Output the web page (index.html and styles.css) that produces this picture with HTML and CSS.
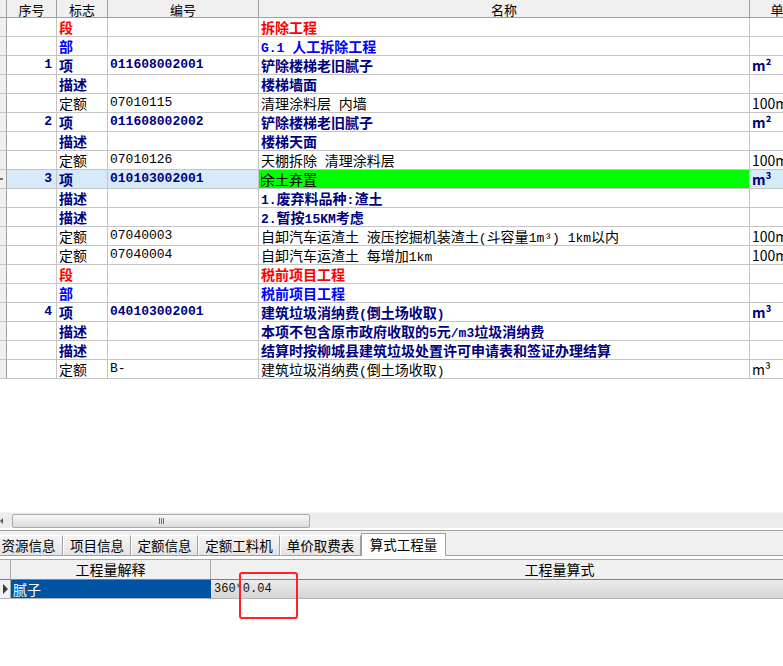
FILE: index.html
```html
<!DOCTYPE html>
<html lang="zh-CN">
<head>
<meta charset="utf-8">
<title>算式工程量</title>
<link rel="stylesheet" href="styles.css">
</head>
<body>
<div class="screen">
  <div class="main">
    <div class="row head">
      <div class="c rh"></div>
      <div class="c hd">序号</div>
      <div class="c hd">标志</div>
      <div class="c hd">编号</div>
      <div class="c hd">名称</div>
      <div class="c hd">单位</div>
    </div>
    <div class="row red">
      <div class="c rh"></div><div class="c num"></div><div class="c">段</div><div class="c"></div><div class="c">拆除工程</div><div class="c"></div>
    </div>
    <div class="row blue">
      <div class="c rh"></div><div class="c num"></div><div class="c">部</div><div class="c"></div><div class="c"><span class="en">G.1 </span>人工拆除工程</div><div class="c"></div>
    </div>
    <div class="row navy">
      <div class="c rh"></div><div class="c num">1</div><div class="c">项</div><div class="c code">011608002001</div><div class="c">铲除楼梯老旧腻子</div><div class="c unit">m²</div>
    </div>
    <div class="row navy">
      <div class="c rh"></div><div class="c num"></div><div class="c">描述</div><div class="c"></div><div class="c">楼梯墙面</div><div class="c"></div>
    </div>
    <div class="row reg">
      <div class="c rh"></div><div class="c num"></div><div class="c">定额</div><div class="c code">07010115</div><div class="c">清理涂料层<span class="en"> </span>内墙</div><div class="c unit">100m²</div>
    </div>
    <div class="row navy">
      <div class="c rh"></div><div class="c num">2</div><div class="c">项</div><div class="c code">011608002002</div><div class="c">铲除楼梯老旧腻子</div><div class="c unit">m²</div>
    </div>
    <div class="row navy">
      <div class="c rh"></div><div class="c num"></div><div class="c">描述</div><div class="c"></div><div class="c">楼梯天面</div><div class="c"></div>
    </div>
    <div class="row reg">
      <div class="c rh"></div><div class="c num"></div><div class="c">定额</div><div class="c code">07010126</div><div class="c">天棚拆除<span class="en"> </span>清理涂料层</div><div class="c unit">100m²</div>
    </div>
    <div class="row navy sel">
      <div class="c rh"><span class="mark"></span></div><div class="c num">3</div><div class="c">项</div><div class="c code">010103002001</div><div class="c edit"><span class="caret"></span>余土弃置</div><div class="c unit">m³</div>
    </div>
    <div class="row navy">
      <div class="c rh"></div><div class="c num"></div><div class="c">描述</div><div class="c"></div><div class="c"><span class="en">1.</span>废弃料品种<span class="en">:</span>渣土</div><div class="c"></div>
    </div>
    <div class="row navy">
      <div class="c rh"></div><div class="c num"></div><div class="c">描述</div><div class="c"></div><div class="c"><span class="en">2.</span>暂按<span class="en">15KM</span>考虑</div><div class="c"></div>
    </div>
    <div class="row reg">
      <div class="c rh"></div><div class="c num"></div><div class="c">定额</div><div class="c code">07040003</div><div class="c">自卸汽车运渣土<span class="en"> </span>液压挖掘机装渣土<span class="en">(</span>斗容量<span class="en">1m³) 1km</span>以内</div><div class="c unit">100m³</div>
    </div>
    <div class="row reg">
      <div class="c rh"></div><div class="c num"></div><div class="c">定额</div><div class="c code">07040004</div><div class="c">自卸汽车运渣土<span class="en"> </span>每增加<span class="en">1km</span></div><div class="c unit">100m³</div>
    </div>
    <div class="row red">
      <div class="c rh"></div><div class="c num"></div><div class="c">段</div><div class="c"></div><div class="c">税前项目工程</div><div class="c"></div>
    </div>
    <div class="row blue">
      <div class="c rh"></div><div class="c num"></div><div class="c">部</div><div class="c"></div><div class="c">税前项目工程</div><div class="c"></div>
    </div>
    <div class="row navy">
      <div class="c rh"></div><div class="c num">4</div><div class="c">项</div><div class="c code">040103002001</div><div class="c">建筑垃圾消纳费<span class="en">(</span>倒土场收取<span class="en">)</span></div><div class="c unit">m³</div>
    </div>
    <div class="row navy">
      <div class="c rh"></div><div class="c num"></div><div class="c">描述</div><div class="c"></div><div class="c">本项不包含原市政府收取的<span class="en">5</span>元<span class="en">/m3</span>垃圾消纳费</div><div class="c"></div>
    </div>
    <div class="row navy">
      <div class="c rh"></div><div class="c num"></div><div class="c">描述</div><div class="c"></div><div class="c">结算时按柳城县建筑垃圾处置许可申请表和签证办理结算</div><div class="c"></div>
    </div>
    <div class="row reg">
      <div class="c rh"></div><div class="c num"></div><div class="c">定额</div><div class="c code">B-</div><div class="c">建筑垃圾消纳费<span class="en">(</span>倒土场收取<span class="en">)</span></div><div class="c unit">m³</div>
    </div>
  </div>

  <div class="hscroll">
    <span class="arrow"></span>
    <div class="thumb"><span class="grip"></span></div>
  </div>

  <div class="tabs">
    <div class="tab first">资源信息</div>
    <div class="tab w68">项目信息</div>
    <div class="tab w67">定额信息</div>
    <div class="tab w82">定额工料机</div>
    <div class="tab w81">单价取费表</div>
    <div class="tab active">算式工程量</div>
    <div class="tabfill"></div>
  </div>

  <div class="bgrid">
    <div class="brow">
      <div class="bc brh"></div>
      <div class="bc bhd">工程量解释</div>
      <div class="bc bhd">工程量算式</div>
    </div>
    <div class="brow">
      <div class="bc brh data"><span class="tri"></span></div>
      <div class="bc bsel">腻子</div>
      <div class="bc bexpr">360*0.04</div>
    </div>
  </div>

  <div class="highlight"></div>
</div>
</body>
</html>
```

FILE: styles.css
```css
* { box-sizing: border-box; }

body {
  margin: 0;
  background: #fff;
  font-family: "Noto Sans CJK SC", "Noto Sans", sans-serif;
  font-size: 14px;
  color: #000;
}

.screen {
  width: 783px;
  height: 666px;
  overflow: hidden;
  position: relative;
  display: flex;
  flex-direction: column;
}

.main {
  height: 512px;
  flex: none;
  overflow: hidden;
}

.row {
  display: grid;
  grid-template-columns: 7px 50px 51px 151px 491px 68px;
  width: 818px;
}

.c {
  height: 19px;
  line-height: 18px;
  padding-left: 2px;
  border-right: 1px solid #c4c4c4;
  border-bottom: 1px solid #c4c4c4;
  white-space: nowrap;
}

.c.unit { overflow: hidden; }

.head .c {
  height: 18px;
  line-height: 15px;
  padding: 2px 0 0;
  font-size: 13px;
  text-align: center;
  background: #f0f0f0;
  border-right-color: #a0a0a0;
  border-bottom-color: #a0a0a0;
  font-weight: normal;
  color: #000;
}

.c.rh {
  background: #f0f0f0;
  padding: 0;
  border-right-color: #a0a0a0;
  position: relative;
}

.mark {
  position: absolute;
  left: 0;
  top: 8px;
  width: 3px;
  height: 2px;
  background: #707070;
}

.c.num {
  text-align: right;
  padding-right: 4px;
  font-family: "Liberation Mono", monospace;
  font-size: 13px;
}

.code, .en {
  font-family: "Liberation Mono", monospace;
  font-size: 13px;
}

.red .c { color: #ff0000; font-weight: bold; }
.blue .c { color: #0000ff; font-weight: bold; }
.navy .c { color: #000080; font-weight: bold; }
.reg .c { color: #000; font-weight: normal; }

.sel .c { background: #d6eaf9; }
.sel .c.rh { background: #f0f0f0; }
.sel .c.edit {
  background: #00ff00;
  color: #000;
  font-weight: normal;
}

.caret {
  display: inline-block;
  width: 1px;
  height: 14px;
  margin-right: -1px;
  vertical-align: -2px;
  background: #c000c0;
}

/* horizontal scrollbar */
.hscroll {
  height: 16px;
  flex: none;
  background: #ececec;
  border-top: 1px solid #f4f4f4;
  display: flex;
  align-items: center;
  position: relative;
}

.arrow {
  width: 0;
  height: 0;
  border-right: 3px solid #555;
  border-top: 3px solid transparent;
  border-bottom: 3px solid transparent;
}

.thumb {
  margin-left: 9px;
  width: 298px;
  height: 14px;
  border: 1px solid #a9a9a9;
  border-radius: 2px;
  background: linear-gradient(#f7f7f7, #dcdcdc);
  display: flex;
  align-items: center;
  justify-content: center;
}

.grip {
  width: 5px;
  height: 6px;
  border-left: 1px solid #6f6f6f;
  border-right: 1px solid #6f6f6f;
  background: linear-gradient(90deg, transparent 1px, #6f6f6f 1px, #6f6f6f 2px, transparent 2px);
}

/* tabs */
.tabs {
  margin-top: 2px;
  height: 26px;
  flex: none;
  display: flex;
  align-items: flex-end;
  border-top: 1px solid #a0a0a0;
  background: #f0f0f0;
}

.tab {
  height: 21px;
  line-height: 19px;
  text-align: center;
  white-space: nowrap;
  font-size: 13.5px;
  border: 1px solid;
  border-color: #ffffff #a0a0a0 #a0a0a0 #ffffff;
  background: linear-gradient(#f4f4f4, #e4e4e4);
  flex: none;
}

.tab.first { width: 69px; margin-left: -6px; }
.tab.w68 { width: 68px; }
.tab.w67 { width: 67px; }
.tab.w82 { width: 82px; }
.tab.w81 { width: 81px; }

.tab.active {
  width: 85px;
  height: 23px;
  line-height: 21px;
  background: #fff;
  border-color: #a0a0a0;
  border-bottom: none;
}

.tabfill {
  flex: 1;
  height: 100%;
  border-bottom: 1px solid #a0a0a0;
}

/* bottom grid */
.bgrid {
  margin-top: 3px;
  flex: none;
  border-top: 1px solid #a8a8a8;
  width: 909px;
}

.brow {
  display: grid;
  grid-template-columns: 11px 200px 698px;
}

.bc {
  height: 19px;
  line-height: 18px;
  white-space: nowrap;
  border-right: 1px solid #a8a8a8;
  border-bottom: 1px solid #b4b4b4;
}

.bhd {
  height: 20px;
  line-height: 19px;
  text-align: center;
  background: #f0f0f0;
  border-bottom-color: #808080;
}

.brh {
  height: 20px;
  background: #f0f0f0;
  border-bottom-color: #808080;
}

.brh.data {
  height: 19px;
  border-bottom-color: #b4b4b4;
  display: flex;
  align-items: center;
  padding-left: 3px;
}

.tri {
  width: 0;
  height: 0;
  border-left: 5px solid #3c3c3c;
  border-top: 5px solid transparent;
  border-bottom: 5px solid transparent;
}

.bsel {
  background: #0052a4;
  color: #fff;
  padding-left: 2px;
  border-right-color: #0052a4;
}

.bexpr {
  background: linear-gradient(#ececec, #d5d5d5);
  padding-left: 3px;
  font-family: "Liberation Mono", monospace;
  font-size: 12px;
  color: #111;
}

.highlight {
  position: absolute;
  left: 239px;
  top: 572px;
  width: 59px;
  height: 47px;
  border: 2px solid #ff2222;
  border-radius: 3px;
}
```
